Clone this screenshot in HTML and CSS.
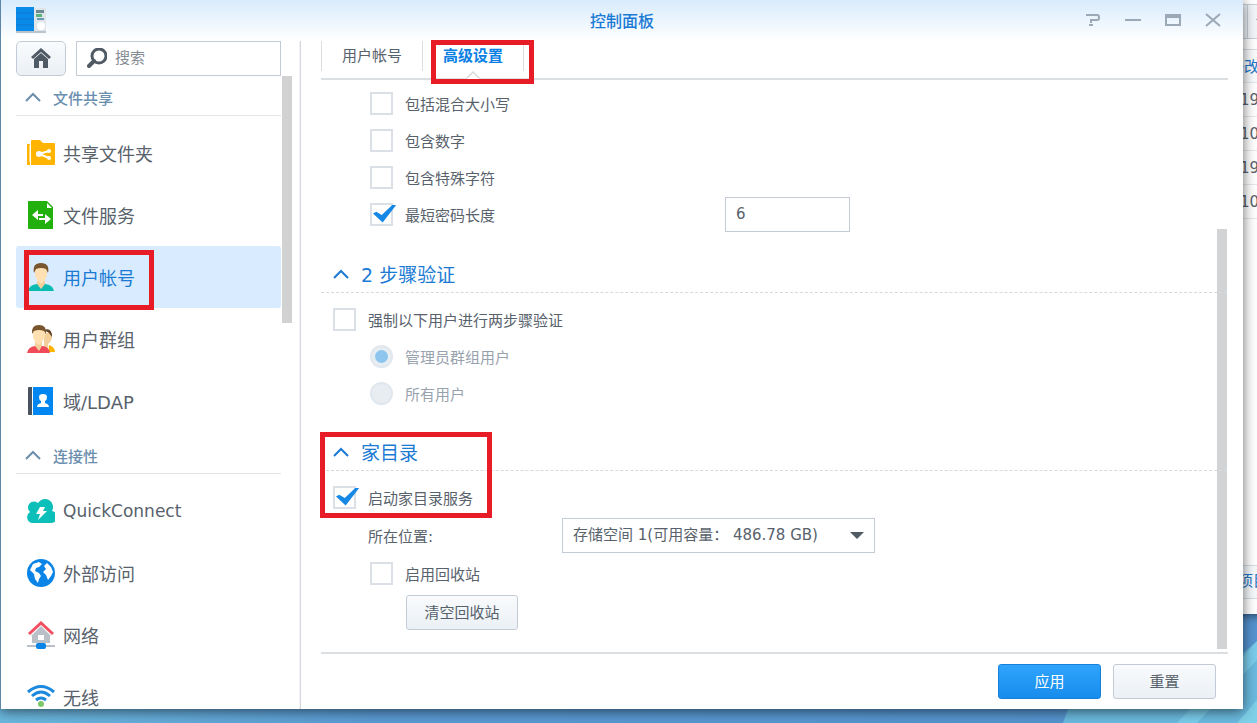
FILE: index.html
```
<!DOCTYPE html>
<html lang="zh-CN">
<head>
    <meta charset="UTF-8">
    <meta name="viewport" content="width=device-width, initial-scale=1.0">
    <title>控制面板</title>
    <link rel="stylesheet" href="styles.css">
</head>
<body>
    <div class="desktop">
        <svg class="wallpaper" viewBox="0 0 1257 723" preserveAspectRatio="none" aria-hidden="true">
            <path d="M1063 723L1068 709L1190 700L1257 641V723Z" fill="#6abadf"/>
            <path d="M1177 723L1190 709L1243 657L1257 641V660L1197 723Z" fill="#7accea"/>
            <path d="M1237 723L1257 700V723Z" fill="#7fd0e8"/>
        </svg>

        <!-- File Station -->
        <section class="back-window">
            <div class="back-toolbar"><span class="back-divider"></span><span class="back-arrow"></span></div>
            <div class="back-row back-head">修改</div>
            <div class="back-row">19</div>
            <div class="back-row">10</div>
            <div class="back-row">19</div>
            <div class="back-row">10</div>
            <div class="back-status">项目</div>
        </section>

        <main class="window">
            <header class="title-bar">
                <svg class="app-icon" viewBox="0 0 30 26">
                    <rect x="0" y="23" width="30" height="3" fill="#b9c3cc"/>
                    <rect x="17" y="1" width="13" height="23" fill="#e0e5ea"/>
                    <rect x="0" y="0" width="18" height="24" fill="#0a8ae8"/>
                    <path d="M0 6H18M0 12H18M0 18H18" stroke="#0a7bd2"/>
                    <rect x="20" y="3" width="8" height="3" fill="#6c8a94"/>
                    <rect x="20" y="7" width="6" height="3" fill="#58b47c"/>
                    <rect x="21" y="11" width="7" height="2" fill="#6a98b4"/>
                    <circle cx="25" cy="19" r="4" fill="#fff"/>
                </svg>
                <h1>控制面板</h1>
                <div class="window-tools">
                    <button type="button" aria-label="帮助"><svg viewBox="0 0 16 16"><path d="M1 3H12Q14 3 14 5V6Q14 8 12 8H6V11M4 13H8" /></svg></button>
                    <button type="button" aria-label="最小化"><svg viewBox="0 0 16 16"><path d="M0 8H16" /></svg></button>
                    <button type="button" aria-label="最大化"><svg viewBox="0 0 16 16"><path d="M1 3H15V13H1ZM1 5H15" /></svg></button>
                    <button type="button" aria-label="关闭"><svg viewBox="0 0 16 16"><path d="M1 2L15 14M15 2L1 14" /></svg></button>
                </div>
            </header>

            <div class="window-body">
                <nav class="sidebar">
                    <div class="sidebar-tools">
                        <button type="button" class="btn home-btn" aria-label="首页">
                            <svg viewBox="0 0 20 20"><path d="M10 0L20 9L18 11L10 4L2 11L0 9Z"/><path d="M10 5L17 11V20H12V13H8V20H3V11Z"/></svg>
                        </button>
                        <label class="search">
                            <svg viewBox="0 0 20 20"><circle cx="12" cy="8" r="7"/><path d="M7 13L2 18" stroke-width="4"/></svg>
                            <input type="text" placeholder="搜索" aria-label="搜索">
                        </label>
                    </div>
                    <div class="sidebar-scroll">
                        <div class="sidebar-list">
                            <h2><svg class="chevron" viewBox="0 0 16 10"><path d="M1 9L8 2L15 9"/></svg>文件共享</h2>
                            <ul>
                                <li><a href="#">
                                    <svg viewBox="0 0 28 28"><path d="M0 5H3V26H0Z M4 2Q4 1 5 1H13L16 4H27Q28 4 28 5V25Q28 26 27 26H4Z" fill="#ffb400"/><path d="M3 6V23" stroke="#fff"/><path d="M22 12L12 15L22 19" fill="none" stroke="#fff" stroke-width="2"/><circle cx="12" cy="15" r="3" fill="#fff"/><circle cx="22" cy="12" r="2" fill="#fff"/><circle cx="22" cy="19" r="2" fill="#fff"/></svg>
                                    共享文件夹</a></li>
                                <li><a href="#">
                                    <svg viewBox="0 0 28 28"><path d="M2 0H20L26 6V28H2Q1 28 1 27V1Q1 0 2 0Z" fill="#22b10c"/><path d="M20 2V7H25Z" fill="#fff"/><path d="M5 14L11 9V13H16V15H11V19ZM24 18L18 13V17H12V19H18V23Z" fill="#fff"/></svg>
                                    文件服务</a></li>
                                <li class="active"><a href="#">
                                    <svg viewBox="0 0 28 28"><path d="M1 28Q2 22 10 21H18Q26 22 27 28Z" fill="#0bbab0"/><path d="M10 18H18V21L14 26L10 21Z" fill="#f3cf9c"/><path d="M8 5H20V12Q19 17 14 21Q9 17 8 12Z" fill="#ffe0b2"/><path d="M7 10Q5 0 14 0Q23 0 21 10L19 6Q14 4 9 6Z" fill="#77552e"/></svg>
                                    用户帐号</a><span class="mark mark-user"></span></li>
                                <li><a href="#">
                                    <svg viewBox="0 0 28 28"><path d="M22 20Q28 22 28 27H22Z" fill="#ffb400"/><path d="M17 8H25V13Q24 17 21 19L22 26L17 21Z" fill="#f3cf9c"/><path d="M17 5Q25 2 25 12L22 8Z" fill="#604020"/><path d="M0 28Q1 22 8 21H16Q22 22 23 28Z" fill="#f04a58"/><path d="M8 17H15V21L12 26L8 21Z" fill="#f3cf9c"/><path d="M6 5H18V12Q16 17 12 20Q7 17 6 12Z" fill="#ffe0b2"/><path d="M5 9Q4 0 12 0Q20 0 19 9L17 6Q12 4 7 6Z" fill="#77552e"/></svg>
                                    用户群组</a></li>
                                <li><a href="#">
                                    <svg viewBox="0 0 28 28"><path d="M2 0H5V28H2Q1 28 1 27V1Q1 0 2 0Z" fill="#47535e"/><path d="M6 0H26V28H6Z" fill="#0086f0"/><path d="M10 20Q10 17 14 16V14Q12 13 12 10Q12 7 16 7Q20 7 20 10Q20 13 18 14V16Q22 17 22 20Z" fill="#fff"/></svg>
                                    域/LDAP</a></li>
                            </ul>
                            <h2><svg class="chevron" viewBox="0 0 16 10"><path d="M1 9L8 2L15 9"/></svg>连接性</h2>
                            <ul>
                                <li><a href="#" class="latin">
                                    <svg viewBox="0 0 28 28"><path d="M5 26A6 6 0 0 1 3 15A6 6 0 0 1 11 6A8 8 0 0 1 25 14A6 6 0 0 1 23 26Z" fill="#0cbfb9"/><path d="M13 10H18L16 14H20L11 23L13 17H9Z" fill="#fff"/></svg>
                                    QuickConnect</a></li>
                                <li><a href="#">
                                    <svg viewBox="0 0 28 28"><circle cx="14" cy="14" r="14" fill="#0a84e6"/><path d="M3 11L6 5L12 3L15 5L12 8L9 9L8 12L12 14L14 17L12 20L11 24L8 20L7 15ZM17 7L20 4L24 8L26 13L24 17L21 21L19 16L16 13L19 10Z" fill="#fff"/></svg>
                                    外部访问</a></li>
                                <li><a href="#">
                                    <svg viewBox="0 0 28 28"><path d="M14 5L24 15H23V22H5V15H4Z" fill="#b9c0c8"/><path d="M11 14H17V19H11Z" fill="#fff"/><path d="M2 13L14 2L26 13" fill="none" stroke="#f05060" stroke-width="3"/><path d="M0 25H28" stroke="#b9c0c8" stroke-width="2"/><rect x="9" y="22" width="10" height="6" rx="2" fill="#0a84e6"/></svg>
                                    网络</a></li>
                                <li><a href="#">
                                    <svg viewBox="0 0 28 28"><g fill="none" stroke="#1c8ae0" stroke-width="3"><path d="M1 9Q14 -2 27 9"/><path d="M5 13Q14 5 23 13"/><path d="M9 17Q14 13 19 17"/></g><circle cx="14" cy="21" r="3" fill="#7cc868"/></svg>
                                    无线</a></li>
                            </ul>
                        </div>
                        <div class="sidebar-thumb"></div>
                    </div>
                </nav>

                <form class="content">
                    <div class="tabs">
                        <a href="#" class="tab">用户帐号</a>
                        <a href="#" class="tab active">高级设置<span class="mark mark-tab"></span></a>
                    </div>

                    <div class="settings">
                        <div class="fields">
                            <label class="row indent"><input type="checkbox">包括混合大小写</label>
                            <label class="row indent"><input type="checkbox">包含数字</label>
                            <label class="row indent"><input type="checkbox">包含特殊字符</label>
                            <div class="row indent length-row">
                                <label><input type="checkbox" checked>最短密码长度</label>
                                <input type="text" class="text-box" value="6" aria-label="最短密码长度">
                            </div>

                            <section>
                                <h3><svg class="chevron" viewBox="0 0 16 10"><path d="M1 9L8 2L15 9"/></svg>2 步骤验证</h3>
                                <label class="row"><input type="checkbox">强制以下用户进行两步骤验证</label>
                                <label class="row indent disabled"><input type="radio" name="scope" checked disabled>管理员群组用户</label>
                                <label class="row indent disabled"><input type="radio" name="scope" disabled>所有用户</label>
                            </section>

                            <section>
                                <h3><svg class="chevron" viewBox="0 0 16 10"><path d="M1 9L8 2L15 9"/></svg>家目录</h3>
                                <label class="row"><input type="checkbox" checked>启动家目录服务</label>
                                <div class="row location-row">
                                    <label for="location">所在位置:</label>
                                    <span class="select">
                                        <select id="location"><option>存储空间 1(可用容量： 486.78 GB)</option></select>
                                    </span>
                                </div>
                                <label class="row indent"><input type="checkbox">启用回收站</label>
                                <button type="button" class="btn empty-btn">清空回收站</button>
                                <span class="mark mark-home"></span>
                            </section>
                        </div>
                        <div class="settings-thumb"></div>
                    </div>

                    <footer>
                        <button type="submit" class="btn primary">应用</button>
                        <button type="reset" class="btn">重置</button>
                    </footer>
                </form>
            </div>
        </main>
    </div>
</body>
</html>
```

FILE: styles.css
```
* {
    margin: 0;
    padding: 0;
    box-sizing: border-box;
}

body, button, input, select {
    font-family: "DejaVu Sans", "Noto Sans CJK SC", sans-serif;
    font-size: 15px;
    font-weight: 400;
    color: #58626c;
}

a {
    color: inherit;
    text-decoration: none;
}

ul {
    list-style: none;
}

.desktop {
    position: relative;
    height: 100vh;
    overflow: hidden;
    padding: 0 14px 14px 0;
    background: linear-gradient(90deg, #6bb8de 0%, #5a9ad3 30%, #5593cf 100%);
}

.wallpaper {
    position: absolute;
    inset: 0;
    width: 100%;
    height: 100%;
}

/* window behind */
.back-window {
    position: absolute;
    top: 0;
    bottom: 109px;
    left: calc(100% - 28px);
    width: 320px;
    display: flex;
    flex-direction: column;
    background: #fff;
    box-shadow: 0 2px 8px rgba(0, 0, 0, 0.5);
}

.back-toolbar {
    display: flex;
    align-items: center;
    height: 35px;
    margin: 4px 0 10px;
    border: 1px solid #c8d0d8;
    background: #f2f6fa;
}

.back-divider {
    width: 1px;
    height: 100%;
    margin: 0 8px 0 17px;
    background: #c8d0d8;
}

.back-arrow {
    border: 5px solid transparent;
    border-top-color: #505a64;
    border-bottom: 0;
}

.back-row {
    height: 34px;
    padding-left: 11px;
    line-height: 34px;
    border-bottom: 1px solid #e3e8ed;
}

.back-head {
    padding-left: 0;
    border-top: 1px solid #d5dce2;
    background: #f8fafc;
    color: #1c76c8;
}

.back-status {
    height: 34px;
    margin: auto 0 15px;
    padding-left: 9px;
    line-height: 30px;
    border: solid #d5dce2;
    border-width: 1px 0;
    background: #f5f9fc;
    color: #1c76c8;
}

/* control panel window */
.window {
    position: relative;
    display: flex;
    flex-direction: column;
    height: 100%;
    border-left: 1px solid #5d86a8;
    background: linear-gradient(#d8ebfc, #fff 41px);
    box-shadow: 0 2px 12px rgba(0, 0, 0, 0.6);
}

.title-bar {
    display: grid;
    grid-template-columns: 1fr auto 1fr;
    align-items: center;
    height: 41px;
    padding: 0 15px 2px;
}

.app-icon {
    width: 30px;
    height: 26px;
}

.title-bar h1 {
    font-size: 16px;
    font-weight: 500;
    color: #1a7ad4;
}

.window-tools {
    display: flex;
    justify-content: flex-end;
    gap: 24px;
    padding-right: 7px;
}

.window-tools button {
    width: 16px;
    height: 16px;
    border: 0;
    background: none;
}

.window-tools svg {
    display: block;
    fill: none;
    stroke: #9ba9b6;
    stroke-width: 2;
}

.window-body {
    flex: 1;
    display: grid;
    grid-template-columns: 300px 1fr;
    min-height: 0;
}

.btn {
    height: 35px;
    padding-bottom: 2px;
    border: 1px solid #c3ccd6;
    border-radius: 3px;
    background: linear-gradient(#f9fbfd, #ebf0f5);
}

.mark {
    position: absolute;
    border: 5px solid #e81c26;
    pointer-events: none;
}

/* sidebar */
.sidebar {
    display: flex;
    flex-direction: column;
    min-height: 0;
    padding-left: 15px;
    border-right: 1px solid #d4d8dc;
    box-shadow: inset -1px 0 #f1f2f3;
}

.sidebar-tools {
    display: flex;
    gap: 10px;
    padding-right: 19px;
}

.home-btn {
    width: 50px;
    border-radius: 5px;
}

.home-btn svg {
    display: block;
    width: 20px;
    margin: 0 auto;
    fill: #505a64;
}

.search {
    flex: 1;
    display: flex;
    align-items: center;
    gap: 8px;
    height: 35px;
    padding: 0 0 2px 10px;
    border: 1px solid #c3ccd6;
    background: #fff;
}

.search svg {
    flex: none;
    width: 20px;
    fill: none;
    stroke: #505a64;
    stroke-width: 3;
    stroke-linecap: round;
}

.search input {
    width: 100%;
    border: 0;
    outline: none;
    background: none;
}

.search input::placeholder {
    color: #858c94;
}

.sidebar-scroll {
    flex: 1;
    display: flex;
    gap: 1px;
    overflow: hidden;
}

.sidebar-list {
    width: 265px;
}

.sidebar-thumb {
    width: 10px;
    height: 39%;
    background: #d2d2d2;
}

.chevron {
    width: 16px;
    height: 10px;
    fill: none;
    stroke: currentColor;
    stroke-width: 2;
}

.sidebar h2 {
    display: flex;
    align-items: center;
    gap: 12px;
    height: 40px;
    padding: 3px 0 0 9px;
    border-bottom: 1px solid #e3e6e9;
    font-size: 15px;
    font-weight: 500;
    color: #6a8eae;
}

.sidebar ul {
    padding: 6px 0 2px;
}

.sidebar li {
    position: relative;
    border-radius: 3px;
}

.sidebar li a {
    display: flex;
    align-items: center;
    gap: 8px;
    height: 62px;
    padding-left: 11px;
    font-size: 18px;
}

.sidebar li a.latin {
    font-size: 17px;
}

.sidebar li svg {
    width: 28px;
    height: 28px;
}

.sidebar li.active {
    background: #d9ecff;
    color: #1a7ad4;
}

.mark-user {
    top: 4px;
    left: 8px;
    width: 130px;
    height: 60px;
}

/* content */
.content {
    display: flex;
    flex-direction: column;
    min-width: 0;
    min-height: 0;
    padding: 0 15px 0 20px;
}

.tabs {
    display: flex;
    height: 39px;
    border-bottom: 2px solid #dcdfe2;
}

.tab {
    position: relative;
    height: 30px;
    padding: 0 20px;
    border-right: 1px solid #d8dde2;
    line-height: 30px;
}

.tab:first-child {
    border-left: 1px solid #d8dde2;
}

.tab.active {
    font-weight: 700;
    color: #0a80e4;
}

.tab.active::before,
.tab.active::after {
    content: "";
    position: absolute;
    top: 30px;
    left: 50%;
    margin-left: -7px;
    border: 7px solid transparent;
    border-top: 0;
    border-bottom-color: #d5d9dd;
}

.tab.active::after {
    top: 32px;
    border-bottom-color: #fff;
}

.mark-tab {
    top: -1px;
    left: 8px;
    width: 103px;
    height: 44px;
    z-index: 1;
}

.settings {
    flex: 1;
    display: flex;
    min-height: 0;
    border-bottom: 2px solid #dcdfe2;
}

.fields {
    flex: 1;
    padding-top: 5px;
}

.settings-thumb {
    width: 10px;
    height: 420px;
    margin: auto 1px 3px 0;
    background: #d2d3d4;
}

.row {
    display: flex;
    align-items: center;
    gap: 12px;
    height: 37px;
    padding: 0 0 1px 12px;
}

.row.indent {
    padding-left: 49px;
}

.row.disabled {
    color: #98a2ae;
}

.length-row label {
    display: flex;
    align-items: center;
    gap: 12px;
    width: 343px;
}

input[type="checkbox"],
input[type="radio"] {
    appearance: none;
    position: relative;
    flex: none;
    width: 23px;
    height: 23px;
    border: 2px solid #dbe0e6;
    background: #fff;
}

input[type="checkbox"]:checked::before {
    content: "";
    position: absolute;
    top: 0;
    left: 1px;
    width: 23px;
    height: 18px;
    background: #1488e4;
    clip-path: polygon(0 50%, 14% 40%, 38% 58%, 86% 0, 100% 4%, 42% 100%);
}

input[type="radio"] {
    border-color: #e1e7ee;
    border-radius: 50%;
    background: #e8edf1;
}

input[type="radio"]:checked::before {
    content: "";
    position: absolute;
    inset: 3px;
    border-radius: 50%;
    background: #8cc6ee;
}

.text-box {
    width: 125px;
    height: 35px;
    padding: 0 10px;
    border: 1px solid #c3ccd6;
}

.fields section {
    position: relative;
    padding-top: 22px;
}

.fields section + section {
    padding-top: 21px;
}

.fields h3 {
    display: flex;
    align-items: center;
    gap: 12px;
    height: 38px;
    margin: 0 -10px 8px 0;
    padding-left: 12px;
    border-bottom: 1px dashed #d5dadf;
    font-size: 19px;
    font-weight: 400;
    color: #1a7ad4;
}

.location-row {
    height: 39px;
    padding-left: 47px;
}

.location-row label {
    width: 182px;
}

.select {
    position: relative;
}

.select select {
    appearance: none;
    width: 313px;
    height: 35px;
    padding-left: 10px;
    border: 1px solid #c3ccd6;
    background: #fff;
}

.select::after {
    content: "";
    position: absolute;
    top: 14px;
    right: 11px;
    border: 7px solid transparent;
    border-top-color: #505a64;
    border-bottom: 0;
}

.empty-btn {
    display: block;
    width: 112px;
    margin: 3px 0 0 85px;
}

.mark-home {
    top: 20px;
    left: -1px;
    width: 172px;
    height: 86px;
}

footer {
    display: flex;
    justify-content: flex-end;
    gap: 12px;
    padding: 10px 12px;
}

footer .btn {
    width: 103px;
}

.btn.primary {
    border-color: #1580d8;
    background: linear-gradient(#30a4fc, #178cec);
    color: #fff;
}
```
